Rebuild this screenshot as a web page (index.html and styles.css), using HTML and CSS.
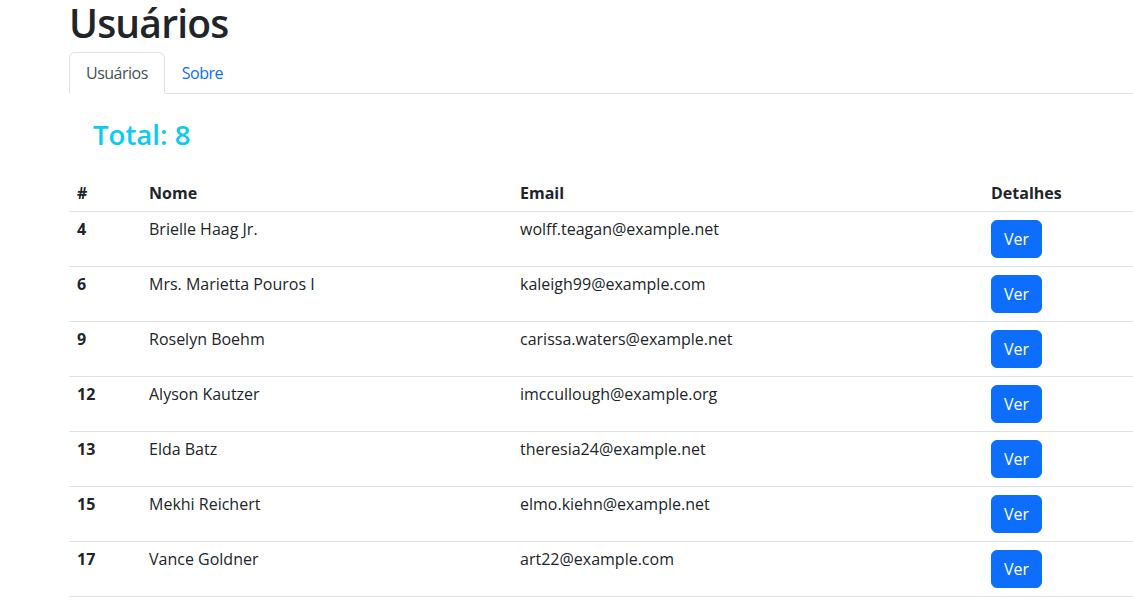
FILE: index.html
```html
<!DOCTYPE html>
<html lang="pt-BR">
<head>
<meta charset="utf-8">
<title>Usuários</title>
<link rel="stylesheet" href="styles.css">
</head>
<body>
<div class="page">
  <h1 class="title">Usuários</h1>
  <ul class="tabs">
    <li><a class="tab active" href="#">Usuários</a></li>
    <li><a class="tab" href="#">Sobre</a></li>
  </ul>
  <div class="pane">
    <h3 class="total">Total: 8</h3>
  </div>
  <table class="users">
    <colgroup>
      <col class="c-id"><col class="c-name"><col class="c-email"><col class="c-det">
    </colgroup>
    <thead>
      <tr><th>#</th><th>Nome</th><th>Email</th><th>Detalhes</th></tr>
    </thead>
    <tbody>
      <tr><th>4</th><td>Brielle Haag Jr.</td><td>wolff.teagan@example.net</td><td class="act"><button class="btn">Ver</button></td></tr>
      <tr><th>6</th><td>Mrs. Marietta Pouros I</td><td>kaleigh99@example.com</td><td class="act"><button class="btn">Ver</button></td></tr>
      <tr><th>9</th><td>Roselyn Boehm</td><td>carissa.waters@example.net</td><td class="act"><button class="btn">Ver</button></td></tr>
      <tr><th>12</th><td>Alyson Kautzer</td><td>imccullough@example.org</td><td class="act"><button class="btn">Ver</button></td></tr>
      <tr><th>13</th><td>Elda Batz</td><td>theresia24@example.net</td><td class="act"><button class="btn">Ver</button></td></tr>
      <tr><th>15</th><td>Mekhi Reichert</td><td>elmo.kiehn@example.net</td><td class="act"><button class="btn">Ver</button></td></tr>
      <tr><th>17</th><td>Vance Goldner</td><td>art22@example.com</td><td class="act"><button class="btn">Ver</button></td></tr>
    </tbody>
  </table>
</div>
</body>
</html>
```
FILE: styles.css
```css
html, body {
  margin: 0;
  padding: 0;
  background: #fff;
}
body {
  font-family: "Open Sans", "Noto Sans", "Liberation Sans", sans-serif;
  font-size: 16px;
  line-height: 1.5;
  color: #212529;
  overflow: hidden;
}
.page {
  margin-left: 69px;
}
.title {
  margin: 0 0 5px;
  font-size: 39px;
  font-weight: 600;
  letter-spacing: -0.8px;
  line-height: 1.2;
}
.tabs {
  display: flex;
  list-style: none;
  margin: 0;
  padding: 0;
  border-bottom: 1px solid #dee2e6;
}
.tab {
  display: block;
  padding: 8px 16px;
  border: 1px solid transparent;
  border-top-left-radius: 6px;
  border-top-right-radius: 6px;
  margin-bottom: -1px;
  color: #0d6efd;
  text-decoration: none;
  letter-spacing: -0.5px;
}
.tab.active {
  color: #495057;
  background: #fff;
  border-color: #dee2e6 #dee2e6 #fff;
}
.pane {
  padding: 24px 24px 0;
}
.total {
  margin: 0 0 20px;
  font-size: 27.6px;
  font-weight: 600;
  line-height: 1.2;
  color: #0dcaf0;
}
.users {
  width: 100%;
  border-collapse: collapse;
}
.c-id { width: 72px; }
.c-name { width: 371px; }
.c-email { width: 471px; }
.users th, .users td {
  padding: 5px 8px 11px;
  text-align: left;
  vertical-align: top;
  border-bottom: 1px solid #dee2e6;
}
.users thead th {
  padding: 10px 8px 6px;
}
.users td.act {
  padding: 8px;
}
.users th {
  font-weight: 700;
}
.btn {
  display: inline-block;
  font-family: inherit;
  font-size: 16px;
  line-height: 24px;
  padding: 6px 12px;
  color: #fff;
  background: #0d6efd;
  border: 1px solid #0d6efd;
  border-radius: 6px;
  cursor: pointer;
}
```
